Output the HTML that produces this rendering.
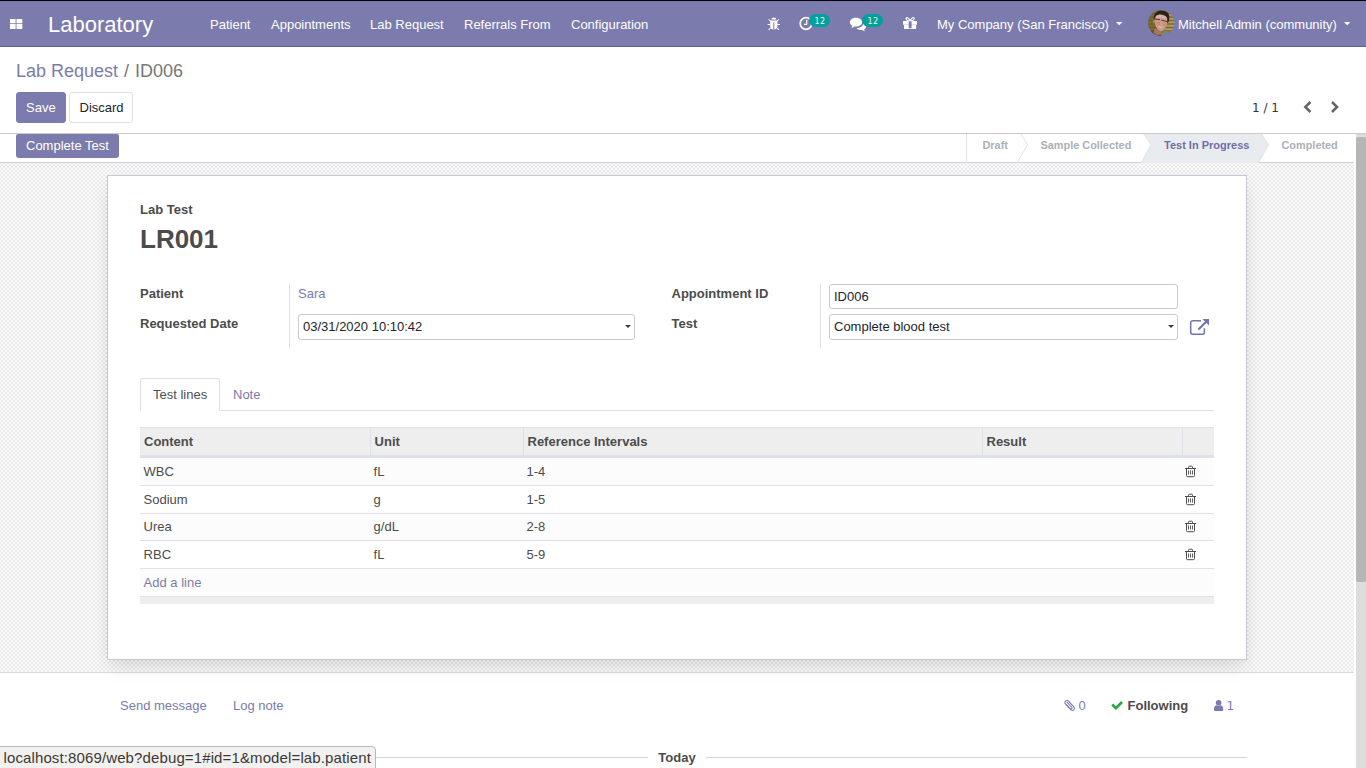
<!DOCTYPE html>
<html lang="en">
<head>
<meta charset="utf-8">
<title>Odoo - Lab Request</title>
<style>
*{box-sizing:border-box;}
html,body{margin:0;padding:0;}
body{width:1366px;height:768px;overflow:hidden;position:relative;background:#fff;color:#4c4c4c;
  font-family:"Liberation Sans",Arial,Helvetica,sans-serif;font-size:13px;line-height:1.5;}
a{color:#7c7bad;text-decoration:none;}
.abs{position:absolute;}
/* ---------- navbar ---------- */
#topline{position:absolute;left:0;top:0;width:1366px;height:1px;background:#000;z-index:5;}
#navbar{position:absolute;left:0;top:0;width:1366px;height:47px;background:#7c7bad;border-bottom:1px solid #5f5e97;color:#fff;}
#navbar .t{position:absolute;white-space:nowrap;color:#fff;line-height:20px;font-size:13px;}
#brand{position:absolute;left:48px;top:10px;font-size:22px;line-height:30px;color:#fff;white-space:nowrap;}
.badge{position:absolute;background:#00a09d;color:#fff;font-size:9px;line-height:12px;height:12px;border-radius:6px;padding:0 5px;}
/* ---------- control panel ---------- */
#cp{position:absolute;left:0;top:47px;width:1366px;height:87px;background:#fff;border-bottom:1px solid #cbcbcb;}
#bc{position:absolute;left:16px;top:11px;font-size:18px;line-height:27px;white-space:nowrap;color:#777;}
#bc a{color:#7c7bad;}
.btn{position:absolute;font-size:13px;line-height:19.5px;height:31px;border-radius:3px;border:1px solid transparent;padding:4.5px 9px;white-space:nowrap;}
.btn-primary{background:#7c7bad;border-color:#7c7bad;color:#fff;}
.btn-secondary{background:#fff;border-color:#dee2e6;color:#212529;}
/* ---------- content ---------- */
#content{position:absolute;left:0;top:134px;width:1354px;height:634px;overflow:hidden;background:#fff;}
#statusbar{position:absolute;left:0;top:0;width:1354px;height:29px;background:#fff;border-bottom:1px solid #ced4da;}
#sheetbg{position:absolute;left:0;top:29px;width:1354px;height:510px;border-bottom:1px solid #d9d9d9;
  background:conic-gradient(#e9e9e9 25%,#fdfdfd 0 50%,#e9e9e9 0 75%,#fdfdfd 0) -1px 1px/4px 4px;}
#sheet{position:absolute;left:107px;top:41px;width:1140px;height:485px;background:#fff;border:1px solid #c8c8d3;box-shadow:0 8px 18px -3px rgba(0,0,0,.14);}

/* statusbar */
.sbtn{position:absolute;top:0;height:24px;white-space:nowrap;line-height:19.5px;padding:2px 10px;font-size:13px;}
.st{position:absolute;top:4px;font-size:10.9px;font-weight:bold;line-height:14px;color:#abb0b8;white-space:nowrap;}
/* form */
.lbl{position:absolute;font-weight:bold;color:#4c4c4c;line-height:20px;white-space:nowrap;}
.inp{position:absolute;border:1px solid #ccc;border-radius:3px;background:#fff;color:#212529;font-size:13px;line-height:19.5px;padding:2px 4px;white-space:nowrap;overflow:hidden;}
.vsep{position:absolute;width:1px;background:#ddd;}
.caret{position:absolute;width:0;height:0;border-left:3px solid transparent;border-right:3px solid transparent;border-top:3px solid #3d3d3d;}
/* table */
#tbl{position:absolute;left:32px;top:251px;width:1074px;}
#tbl .th{position:absolute;top:0;height:29px;font-weight:bold;color:#4c4c4c;line-height:20px;padding-top:5px;white-space:nowrap;}
#tbl .row{position:absolute;left:0;width:1074px;border-bottom:1px solid #dee2e6;}
#tbl .row span{position:absolute;top:4px;line-height:20px;white-space:nowrap;color:#4c4c4c;}
#tbl .row.odd{background:#fcfcfc;}
/* chatter */
#chatter .c{position:absolute;line-height:20px;white-space:nowrap;}
#tip{position:absolute;left:-1px;top:746px;width:377px;height:23px;background:#f2f1f0;border:1px solid #b9b9b9;border-top-right-radius:4px;z-index:9;overflow:hidden;}
#tip span{position:absolute;left:3.500px;top:0;font-family:"Liberation Sans",sans-serif;font-size:15px;letter-spacing:.12px;line-height:22px;color:#3b3936;white-space:nowrap;}
/* scrollbar */
#sbar{position:absolute;left:1354px;top:134px;width:12px;height:634px;background:#dedddc;border-left:2px solid #fff;}
#sthumb{position:absolute;left:0;top:3px;width:10px;height:445px;background:#b6b6b6;border-radius:2px;}
</style>
</head>
<body>
<div id="navbar">
  <svg class="abs" style="left:0;top:0" width="40" height="46" viewBox="0 0 40 46"><path d="M10 18.9h5.6v4.3H10zM16.5 18.9h5.8v4.3h-5.8zM10 24h5.6v5H10zM16.5 24h5.8v5h-5.8z" fill="#fff"/></svg>
  <div id="brand">Laboratory</div>
  <div class="t" style="left:210px;top:15px">Patient</div>
  <div class="t" style="left:271px;top:15px">Appointments</div>
  <div class="t" style="left:370px;top:15px">Lab Request</div>
  <div class="t" style="left:464px;top:15px">Referrals From</div>
  <div class="t" style="left:571px;top:15px">Configuration</div>

  <!-- systray icons -->
  <svg class="abs" style="left:760px;top:8px" width="170" height="30" viewBox="760 8 170 30">
    <g fill="#fff" stroke="none">
      <!-- bug -->
      <path d="M771.3 19.6a2.5 2.1 0 0 1 5 0z"/>
      <path d="M770.2 20.6h7.2v5.6a3.6 3.6 0 0 1-3.1 3.4v-7.4h-1v7.4a3.6 3.6 0 0 1-3.1-3.4z"/>
      <path d="M767.6 24h2.7v1h-2.7zM777.3 24h2.7v1h-2.7zM768.2 19.6l.7-.7 1.9 1.9-.7.7zM779.4 19.6l-.7-.7-1.9 1.9.7.7zM768.3 29.6l.7.7 1.9-1.9-.7-.7zM779.3 29.6l-.7.7-1.9-1.9.7-.7z"/>
      <!-- chat -->
      <path d="M856 17.8c3.4 0 6.100 1.950 6.100 4.350s-2.700 4.350-6.100 4.350c-.5 0-1-.05-1.500-.12-.9.800-2 1.300-3.200 1.450.5-.5.900-1.200 1-2-1.500-.8-2.400-2.150-2.400-3.680 0-2.400 2.700-4.350 6.100-4.350z"/>
      <path d="M863.300 22.900c1.700.7 2.800 2 2.800 3.500 0 1.300-.8 2.400-2.100 3.100.1.700.5 1.300 1 1.700-1.100-.1-2.100-.6-2.900-1.300-.4.050-.8.080-1.200.080-1.900 0-3.500-.7-4.500-1.800 4-.1 7-2.300 6.900-5.280z"/>
      <!-- gift -->
      <path d="M903 21h5.700v3.800H903zM911.600 21h5.400v3.800h-5.400zM904 24.900h4.700v4.200H904zM911.600 24.900h4.500v4.200h-4.500zM908.500 28.300h3.300v.8h-3.300z"/>
    </g>
    <!-- clock -->
    <circle cx="806" cy="23.500" r="5.800" fill="none" stroke="#fff" stroke-width="1.700"/>
    <path d="M806.700 19.800v4.500h-2.700" fill="none" stroke="#fff" stroke-width="1.200"/>
    <!-- gift bow -->
    <path d="M910 20.800c-1.200-3.300-3.800-4-4-2.200-.2 1.400 1.800 2.200 4 2.200zM910.200 20.800c1.200-3.300 3.800-4 4-2.200.2 1.400-1.800 2.200-4 2.200z" fill="none" stroke="#fff" stroke-width="1.100"/>
    <!-- badges -->
    <rect x="809" y="14" width="21" height="13" rx="6.500" fill="#00a09d"/>
    <rect x="862" y="14" width="21" height="13" rx="6.500" fill="#00a09d"/>
    <text x="819.900" y="24" font-family="DejaVu Sans, Liberation Sans, sans-serif" font-size="8" letter-spacing=".3" fill="#e9fbf6" text-anchor="middle">12</text>
    <text x="873" y="24" font-family="DejaVu Sans, Liberation Sans, sans-serif" font-size="8" letter-spacing=".3" fill="#e9fbf6" text-anchor="middle">12</text>
  </svg>
  <svg class="abs" style="left:1116px;top:22px" width="7" height="4" viewBox="0 0 7 4"><path d="M0 0h6.400l-3.200 3.200z" fill="#fff"/></svg>
  <svg class="abs" style="left:1344.300px;top:22px" width="7" height="4" viewBox="0 0 7 4"><path d="M0 0h6.400l-3.200 3.200z" fill="#fff"/></svg>
  <!-- avatar -->
  <svg class="abs" style="left:1148px;top:10px" width="26" height="26" viewBox="0 0 26 26">
    <defs><clipPath id="av"><circle cx="13" cy="13" r="13"/></clipPath><filter id="avb" x="-10%" y="-10%" width="120%" height="120%"><feGaussianBlur stdDeviation=".55"/></filter></defs>
    <g clip-path="url(#av)"><g filter="url(#avb)">
      <rect x="-2" y="-2" width="30" height="30" fill="#7c6a36"/>
      <rect x="14" y="-2" width="14" height="30" fill="#98834a"/>
      <path d="M-2 3.500h30M-2 7h30M-2 10.500h30M-2 14h30M-2 17.500h30M-2 21h30" stroke="#5f5128" stroke-width=".8" opacity=".7"/>
      <path d="M15 5h12M16 8.700h11M17 12.200h10M18 15.700h9M17 19.200h10" stroke="#bfa75c" stroke-width="1.600" opacity=".7"/>
      <path d="M-1 27v-4c2-1.500 4.500-2.500 7-3l6 3 4-2.500c2.500.3 4.500 1.200 6.500 2.800l-1 4z" fill="#5b4d42"/>
      <path d="M13.500 21.500l3-1.300c2.200.4 4 1.300 5.600 2.700l-2 4h-7z" fill="#78827f"/>
      <path d="M6.500 18.500l7.500 2.500-.5 3.500c-2.500 1-6 .5-8-2z" fill="#a9735c"/>
      <path d="M6.300 8c0-4.500 3-6.500 7-6.300 4 .2 6.700 2.800 6.400 7.500-.3 4.500-1.600 8.300-3.800 10.500-1.600 1.600-3.800 1.700-5.500.3-2.400-2-4-6.500-4.100-12z" fill="#cc9c89"/>
      <path d="M8.500 4.500c2-1 7-1 9.500.5l.5 4c-3-.8-7-1.300-10.500-1z" fill="#d6b0a2"/>
      <path d="M7.500 12c1.200 2.500 2.800 3.300 4.300 3 .5-1.500.3-2.500-.3-3.500zM14.500 13c1.500.8 3 .8 4-.2-.3 2-1.200 3.600-2.500 4z" fill="#c5745f" opacity=".45"/>
      <path d="M5.400 9.800c-.8 1.200-.3 3.400.8 4l.3-3.800z" fill="#c77a62"/>
      <path d="M5.800 10c-.5-5.500 2-9.300 7.800-9.600 5-.2 8 3 7.700 7.300-.1 2.200-.6 4-1.300 5.300l-.8-.3c.3-2 .2-4-.6-5.600-1.800-1.900-4.500-2.800-7.500-2.500-2.200.4-3.600 1.400-4 3.200z" fill="#29221f"/>
      <path d="M6.200 8.900L12 9.700M13.300 10.100L19.600 11.700" stroke="#3a2f2c" stroke-width=".9" fill="none"/>
      <path d="M10 15.800c1.600 1 3.400 1.200 5 .6-.6 1.500-3.800 1.700-5-.6z" fill="#ecd3cf"/>
    </g></g>
  </svg>
  <div class="t" style="left:937px;top:15px">My Company (San Francisco)</div>
  <div class="t" style="left:1178px;top:15px">Mitchell Admin (community)</div>
</div>
<div id="topline"></div>

<div id="cp">
  <div id="bc"><a>Lab Request</a><span style="padding:0 6px">/</span>ID006</div>
  <div class="btn btn-primary" style="left:16px;top:45px;width:50px">Save</div>
  <div class="btn btn-secondary" style="left:69px;top:45px;width:64px;padding-left:9.5px">Discard</div>
  <div class="abs" style="left:1252px;top:51px;line-height:20px;color:#333;font-family:'DejaVu Sans','Liberation Sans',sans-serif;font-size:12px;white-space:nowrap">1 / 1</div>
  <svg class="abs" style="left:1300px;top:52px" width="44" height="16" viewBox="1300 99 44 16"><path d="M1310.400 102L1305.300 107L1310.400 112M1332 102L1337.100 107L1332 112" fill="none" stroke="#666" stroke-width="2.500"/></svg>
</div>

<div id="content">
  <div id="statusbar">
    <div class="sbtn btn-primary" style="left:16px;width:103px;border-radius:2px 2px 3px 3px;color:#fff">Complete Test</div>
    <svg class="abs" style="left:960px;top:0" width="395" height="29" viewBox="960 134 395 29">
      <polygon points="1143.8,134 1261.6,134 1268.6,145 1258.2,163 1141.2,163 1151,145" fill="#e9ecef"/>
      <path d="M966.5 134V163" stroke="#dee2e6" fill="none"/>
      <path d="M1021 134L1027.6 144.8L1016.8 163M1143.8 134L1151 144.8L1141.2 163M1261.6 134L1268.6 144.8L1258.2 163" stroke="#dee2e6" fill="none"/>
    </svg>
    <div class="st" style="left:982.5px">Draft</div>
    <div class="st" style="left:1040.5px">Sample Collected</div>
    <div class="st" style="left:1164px;color:#6f6ea8;font-size:11px">Test In Progress</div>
    <div class="st" style="left:1281.5px">Completed</div>
  </div>
  <div id="sheetbg"></div>
  <div id="sheet">
    <div class="lbl" style="left:32px;top:24px">Lab Test</div>
    <div class="abs" style="left:32px;top:44px;font-size:26px;font-weight:bold;line-height:39px;color:#4c4c4c;white-space:nowrap">LR001</div>

    <div class="lbl" style="left:32px;top:108px">Patient</div>
    <div class="lbl" style="left:32px;top:138px">Requested Date</div>
    <div class="vsep" style="left:181px;top:108px;height:64px"></div>
    <a class="abs" style="left:190px;top:108px;line-height:20px">Sara</a>
    <div class="inp" style="left:190px;top:138px;width:337px;height:26px">03/31/2020 10:10:42</div>
    <div class="caret" style="left:517px;top:149px"></div>

    <div class="lbl" style="left:563.5px;top:108px">Appointment ID</div>
    <div class="lbl" style="left:563.5px;top:138px">Test</div>
    <div class="vsep" style="left:712px;top:108px;height:64px"></div>
    <div class="inp" style="left:721px;top:108px;width:349px;height:25px">ID006</div>
    <div class="inp" style="left:721px;top:138px;width:349px;height:26px">Complete blood test</div>
    <div class="caret" style="left:1060px;top:149px"></div>
    <svg class="abs" style="left:1080px;top:140px" width="24" height="22" viewBox="1188 316 24 22"><path d="M1204.400 328.300v4a1.900 1.900 0 0 1-1.900 1.900h-9.900a1.900 1.900 0 0 1-1.900-1.900v-9.700a1.900 1.900 0 0 1 1.900-1.900h8.400" fill="none" stroke="#7574ae" stroke-width="1.500"/><path d="M1202.400 319h6.600v6.600z" fill="#7574ae"/><path d="M1206.500 321.500L1198.400 329.600" stroke="#7574ae" stroke-width="2.100" fill="none"/></svg>

    <!-- tabs -->
    <div class="abs" style="left:32px;top:234px;width:1074px;height:1px;background:#dee2e6"></div>
    <div class="abs" style="left:32px;top:202px;width:80px;height:33px;border:1px solid #dee2e6;border-bottom-color:#fff;border-radius:3px 3px 0 0;background:#fff"></div>
    <div class="abs" style="left:45px;top:209px;line-height:20px;color:#495057;white-space:nowrap">Test lines</div>
    <a class="abs" style="left:125px;top:209px;line-height:20px;white-space:nowrap">Note</a>

    <!-- table -->
    <div id="tbl">
      <div class="abs" style="left:0;top:0;width:1074px;height:31px;background:#eee;border-top:1px solid #dee2e6;border-bottom:3px solid #dee2e6"></div>
      <div class="abs" style="left:230px;top:0;width:1px;height:28px;background:#dee2e6"></div>
      <div class="abs" style="left:383px;top:0;width:1px;height:28px;background:#dee2e6"></div>
      <div class="abs" style="left:842px;top:0;width:1px;height:28px;background:#dee2e6"></div>
      <div class="abs" style="left:1042px;top:0;width:1px;height:28px;background:#dee2e6"></div>
      <div class="th" style="left:4px">Content</div>
      <div class="th" style="left:234.600px">Unit</div>
      <div class="th" style="left:387.500px">Reference Intervals</div>
      <div class="th" style="left:846.500px">Result</div>
      <div class="row odd" style="top:31px;height:28px"><span style="left:3.6px">WBC</span><svg class="abs" style="left:1044px;top:7px" width="14" height="14" viewBox="1184 465 14 14"><g fill="none" stroke="#4c4c4c" stroke-width="1"><path d="M1185 468.500h11M1188.500 468.500v-1.300a1 1 0 0 1 1-1h2a1 1 0 0 1 1 1v1.300M1186.500 468.500v7a1.200 1.200 0 0 0 1.200 1.200h5.600a1.200 1.200 0 0 0 1.200-1.200v-7"/><path d="M1188.500 470.500v4M1190.500 470.500v4M1192.500 470.500v4" stroke-width=".9"/></g></svg><span style="left:233.600px">fL</span><span style="left:386.5px">1-4</span></div>
      <div class="row" style="top:59px;height:28px"><span style="left:3.6px">Sodium</span><svg class="abs" style="left:1044px;top:7px" width="14" height="14" viewBox="1184 465 14 14"><g fill="none" stroke="#4c4c4c" stroke-width="1"><path d="M1185 468.500h11M1188.500 468.500v-1.300a1 1 0 0 1 1-1h2a1 1 0 0 1 1 1v1.300M1186.500 468.500v7a1.200 1.200 0 0 0 1.200 1.200h5.600a1.200 1.200 0 0 0 1.200-1.200v-7"/><path d="M1188.500 470.500v4M1190.500 470.500v4M1192.500 470.500v4" stroke-width=".9"/></g></svg><span style="left:233.600px">g</span><span style="left:386.5px">1-5</span></div>
      <div class="row odd" style="top:87px;height:27px"><span style="left:3.6px;top:3px">Urea</span><svg class="abs" style="left:1044px;top:6px" width="14" height="14" viewBox="1184 465 14 14"><g fill="none" stroke="#4c4c4c" stroke-width="1"><path d="M1185 468.500h11M1188.500 468.500v-1.300a1 1 0 0 1 1-1h2a1 1 0 0 1 1 1v1.300M1186.500 468.500v7a1.200 1.200 0 0 0 1.200 1.200h5.600a1.200 1.200 0 0 0 1.200-1.200v-7"/><path d="M1188.500 470.500v4M1190.500 470.500v4M1192.500 470.500v4" stroke-width=".9"/></g></svg><span style="left:233.600px;top:3px">g/dL</span><span style="left:386.5px;top:3px">2-8</span></div>
      <div class="row" style="top:114px;height:28px"><span style="left:3.6px">RBC</span><svg class="abs" style="left:1044px;top:7px" width="14" height="14" viewBox="1184 465 14 14"><g fill="none" stroke="#4c4c4c" stroke-width="1"><path d="M1185 468.500h11M1188.500 468.500v-1.300a1 1 0 0 1 1-1h2a1 1 0 0 1 1 1v1.300M1186.500 468.500v7a1.200 1.200 0 0 0 1.200 1.200h5.600a1.200 1.200 0 0 0 1.200-1.200v-7"/><path d="M1188.500 470.500v4M1190.500 470.500v4M1192.500 470.500v4" stroke-width=".9"/></g></svg><span style="left:233.600px">fL</span><span style="left:386.5px">5-9</span></div>
      <div class="row odd" style="top:142px;height:28px"><span style="left:3.6px;color:#7c7bad">Add a line</span></div>
      <div class="abs" style="left:0;top:170px;width:1074px;height:7px;background:#eee"></div>
    </div>
  </div>
  <div id="chatter">
    <a class="c" style="left:120px;top:562px">Send message</a>
    <a class="c" style="left:233px;top:562px">Log note</a>
    <a class="c" style="left:1078.500px;top:562px">0</a>
    <div class="c" style="left:1127.500px;top:562px;font-weight:bold;color:#4c4c4c">Following</div>
    <a class="c" style="left:1226.400px;top:562px;font-family:'DejaVu Sans','Liberation Sans',sans-serif;font-size:12px">1</a>
    <svg class="abs" style="left:1060px;top:562px" width="170" height="20" viewBox="1060 696 170 20">
      <g transform="translate(1069.650 705.400) rotate(47)" fill="none" stroke="#7574ae" stroke-width="1.050"><rect x="-6" y="-2.100" width="12" height="4.200" rx="2.100"/><path d="M-4.200 -.3h7a1.100 1.100 0 0 1 0 2.200h-5.800"/></g>
      <path d="M1111.300 705.400l1.900-1.900 2.700 2.700 5.200-5.200 1.900 1.900-7.100 7.100z" fill="#28a745"/>
      <circle cx="1218.600" cy="702.800" r="2.800" fill="#7c7bad"/>
      <path d="M1215 710.900a1 1 0 0 1-1-1v-1.400c0-2 1.200-3.100 2.600-3.300.6.400 1.300.6 2 .6s1.400-.2 2-.6c1.400.2 2.600 1.300 2.600 3.300v1.400a1 1 0 0 1-1 1z" fill="#7c7bad"/>
    </svg>
    <div class="abs" style="left:107px;top:623px;width:1140px;height:1px;background:#ced4da"></div>
    <div class="abs" style="left:648px;top:614px;width:58px;height:20px;background:#fff;text-align:center;font-weight:bold;line-height:20px;color:#4c4c4c">Today</div>
  </div>
</div>
<div id="tip"><span>localhost:8069/web?debug=1#id=1&amp;model=lab.patient</span></div>
<div id="sbar"><div id="sthumb"></div></div>
</body>
</html>
